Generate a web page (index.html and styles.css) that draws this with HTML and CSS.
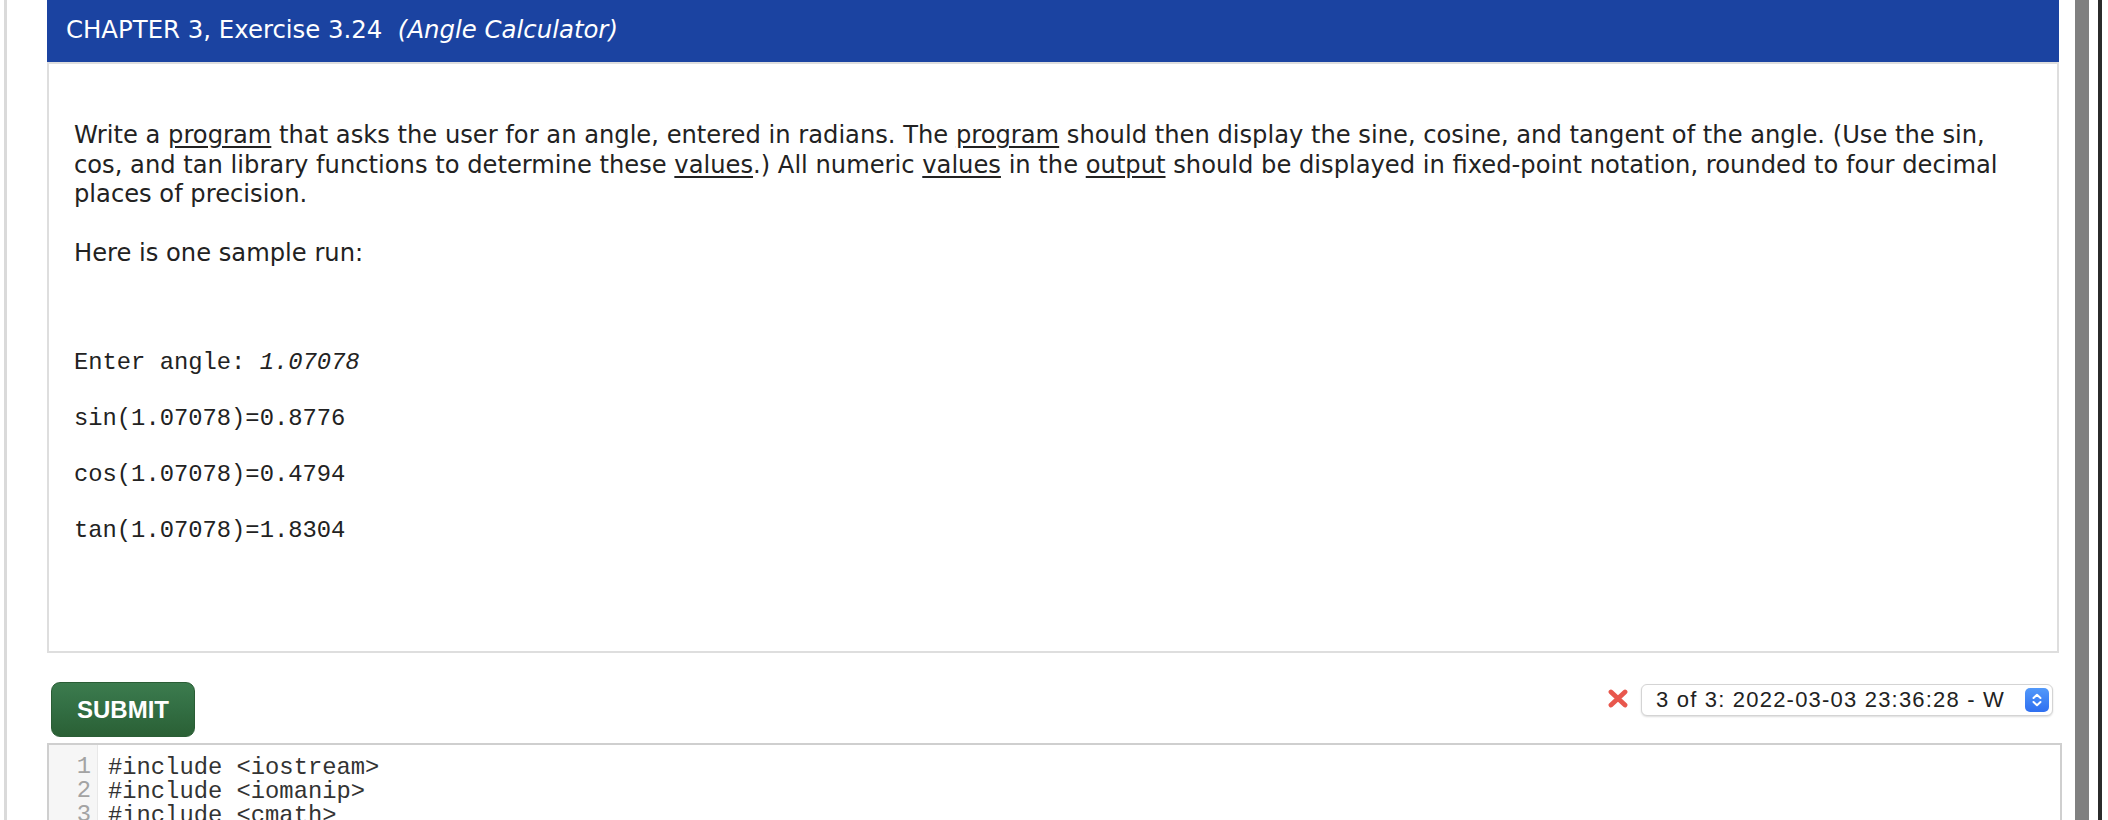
FILE: index.html
```html
<!DOCTYPE html>
<html lang="en">
<head>
<meta charset="utf-8">
<title>CHAPTER 3, Exercise 3.24</title>
<link rel="stylesheet" href="styles.css">
</head>
<body>
<div class="page">
  <div class="rail-left"></div>
  <main class="main">
    <header class="title-bar">
      <span class="title">CHAPTER 3, Exercise 3.24 &nbsp;<em>(Angle Calculator)</em></span>
    </header>
    <section class="prompt">
      <p>Write a <span class="term">program</span> that asks the user for an angle, entered in radians. The <span class="term">program</span> should then display the sine, cosine, and tangent of the angle. (Use the sin,<br>cos, and tan library functions to determine these <span class="term">values</span>.) All numeric <span class="term">values</span> in the <span class="term">output</span> should be displayed in fixed-point notation, rounded to four decimal<br>places of precision.</p>
      <p>Here is one sample run:</p>
<pre class="sample">Enter angle: <i>1.07078</i>

sin(1.07078)=0.8776

cos(1.07078)=0.4794

tan(1.07078)=1.8304</pre>
    </section>
    <div class="action-row">
      <button class="submit" type="button">SUBMIT</button>
      <div class="history">
        <svg class="fail-icon" width="20" height="19" viewBox="0 0 20 19" aria-hidden="true">
          <path d="M3 3 L17 16 M17 3 L3 16" stroke="#e8574d" stroke-width="4.8" stroke-linecap="round" fill="none"/>
        </svg>
        <div class="select">
          <span class="select-text">3 of 3: 2022-03-03 23:36:28 - W</span>
          <span class="stepper">
            <svg width="24" height="24" viewBox="0 0 24 24" aria-hidden="true">
              <path d="M8.5 10 L12 6.8 L15.5 10 M8.5 14 L12 17.2 L15.5 14" stroke="#fff" stroke-width="2" stroke-linecap="round" stroke-linejoin="round" fill="none"/>
            </svg>
          </span>
        </div>
      </div>
    </div>
    <div class="editor">
      <div class="gutter">
        <div>1</div><div>2</div><div>3</div><div>4</div><div>5</div><div>6</div><div>7</div><div>8</div>
      </div>
      <div class="code">
        <div class="line">#include &lt;iostream&gt;</div>
        <div class="line">#include &lt;iomanip&gt;</div>
        <div class="line">#include &lt;cmath&gt;</div>
        <div class="line">using namespace std;</div>
        <div class="line"> </div>
        <div class="line">int main()</div>
        <div class="line">{</div>
        <div class="line">    double angle;</div>
      </div>
    </div>
  </main>
  <div class="rail-scroll"></div>
  <div class="rail-dark"></div>
</div>
</body>
</html>
```

FILE: styles.css
```css
html, body {
  margin: 0;
  padding: 0;
  background: #ffffff;
}

body {
  font-family: "DejaVu Sans", Verdana, sans-serif;
  color: #222222;
}

.page {
  display: flex;
  min-height: 100vh;
}

.rail-left {
  flex: none;
  margin-left: 4px;
  width: 3px;
  background: #dadada;
}

.main {
  flex: none;
  margin-left: 40px;
  width: 2012px;
}

.rail-scroll {
  flex: none;
  margin-left: 16px;
  width: 14px;
  background: #808080;
}

.rail-dark {
  flex: none;
  margin-left: 9px;
  width: 4px;
  background: #2b2b2b;
}

/* title bar */
.title-bar {
  box-sizing: border-box;
  height: 62px;
  background: #1b43a1;
  color: #ffffff;
  display: flex;
  align-items: center;
  padding: 0 0 3px 19px;
  font-size: 24.4px;
}

.title em {
  font-style: italic;
}

/* prompt box */
.prompt {
  box-sizing: border-box;
  height: 591px;
  border: 2px solid #dedede;
  padding: 57px 8px 0 25px;
}

.prompt p {
  margin: 0 0 29.6px;
  font-size: 24.2px;
  line-height: 29.6px;
  color: #222222;
}

.term {
  text-decoration: underline;
  text-underline-offset: 3px;
}

.sample {
  margin: 80px 0 0;
  font-family: "Liberation Mono", "Courier New", monospace;
  font-size: 23.8px;
  line-height: 28px;
  color: #222222;
}

.sample i {
  font-style: italic;
}

/* submit row */
.action-row {
  display: flex;
  justify-content: space-between;
  align-items: flex-start;
  margin-top: 29px;
  padding: 0 6px 0 4px;
}

.submit {
  box-sizing: border-box;
  height: 55px;
  padding: 0 25px;
  border: 1px solid #2a5d35;
  border-radius: 9px;
  background: linear-gradient(#3c7b4e, #336f44 45%, #2a6035);
  color: #ffffff;
  font-family: "Liberation Sans", Arial, sans-serif;
  font-weight: bold;
  font-size: 24px;
  line-height: 1;
}

.history {
  display: flex;
  align-items: center;
  gap: 13px;
  margin-top: 2px;
}

.fail-icon {
  display: block;
  margin-top: -3px;
}

.select {
  box-sizing: border-box;
  width: 412px;
  height: 32px;
  display: flex;
  align-items: center;
  padding: 0 3px 0 14px;
  border: 1px solid #d4d4d4;
  border-radius: 6px;
  background: #ffffff;
  box-shadow: 0 1px 2px rgba(0, 0, 0, 0.14);
}

.select-text {
  font-family: "Liberation Sans", Arial, sans-serif;
  font-size: 22px;
  letter-spacing: 1.2px;
  color: #222222;
  white-space: nowrap;
}

.stepper {
  margin-left: auto;
  width: 24px;
  height: 24px;
  border-radius: 5px;
  background: linear-gradient(#5299fa, #2f6ff0);
}

.stepper svg {
  display: block;
}

/* code editor */
.editor {
  display: flex;
  margin-top: 6px;
  margin-right: -3px;
  border: 2px solid #cfcfcf;
  font-family: "Liberation Mono", "Courier New", monospace;
  font-size: 23.8px;
  line-height: 24px;
}

.gutter {
  flex: none;
  box-sizing: border-box;
  width: 49px;
  padding: 10px 6px 10px 0;
  background: #f6f6f6;
  border-right: 1px solid #e8e8e8;
  text-align: right;
  color: #a3a3a3;
}

.code {
  flex: 1;
  padding: 11px 0 10px 10px;
  color: #333333;
}

.code .line {
  white-space: pre;
  height: 24px;
}
```
